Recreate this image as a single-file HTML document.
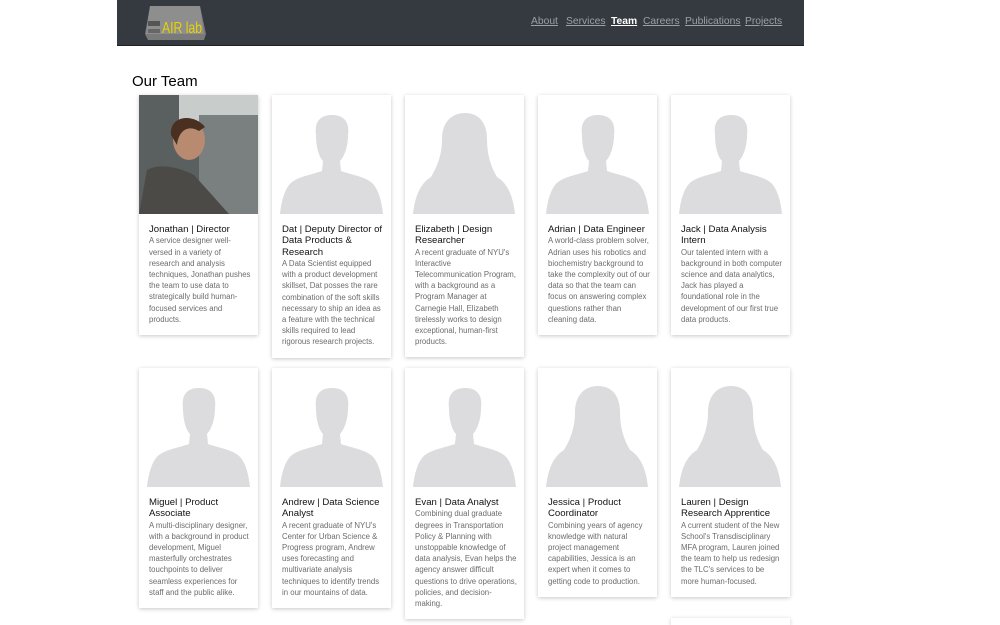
<!DOCTYPE html>
<html style="overflow:hidden;height:625px"><head><meta charset="utf-8"><style>
*{box-sizing:border-box;margin:0;padding:0}
body{width:1000px;height:625px;overflow:hidden;background:#fff;font-family:"Liberation Sans",sans-serif;position:relative}
.nav{position:absolute;left:117px;top:0;width:687px;height:46px;background:#343a40;border-bottom:1px solid #222}
.nav a{position:absolute;top:16px;font-size:10.3px;color:#9aa0a6;text-decoration:underline}
h1{position:absolute;left:132px;top:73px;font-size:15px;font-weight:normal;color:#000}
.card{position:absolute;width:119px;background:#fff;box-shadow:0 1px 4px rgba(0,0,0,.22)}
.card svg{display:block;width:119px;height:119px}
.t{padding:10px 6px 10px 10px}
.t b{display:block;font-weight:normal;font-size:9.6px;line-height:11.3px;color:#111}
.t p{font-size:7.8px;line-height:11.2px;color:#6c6c6c}
</style></head><body>
<div class="nav">
<svg style="position:absolute;left:27px;top:4px" width="64" height="38" viewBox="0 0 64 38"><path d="M6 2 H56 L62 30 L60 36 H4 L1 30 Z" fill="#7a7a7a"/><path d="M6 2 H56 L60 30 H2 Z" fill="#8e8e8e"/><rect x="4" y="17" width="12" height="5" fill="#555"/><rect x="4" y="25" width="12" height="4" fill="#666"/><text x="18" y="29" font-family="Liberation Sans Narrow, Liberation Sans" font-size="16" textLength="40" lengthAdjust="spacingAndGlyphs" fill="#e8d400">AIR lab</text></svg>
<a style="left:414px">About</a><a style="left:449px">Services</a><a style="left:494px;color:#fff;font-weight:bold">Team</a><a style="left:526px">Careers</a><a style="left:568px">Publications</a><a style="left:628px">Projects</a>
</div>
<h1>Our Team</h1>

<svg width="0" height="0" style="position:absolute"><defs>
<symbol id="m" viewBox="0 0 119 119"><rect width="119" height="119" fill="#fff"/><path d="M44 40 C42 25 50 20 60 20 C70 20 78 25 76 40 C76 52 72 62 68 66 L69 76 C80 80 96 82 102 90 C108 98 110 110 111 119 H8 C9 110 11 98 17 90 C23 82 39 80 50 76 L51 66 C47 62 44 52 44 40 Z" fill="#dcdcdf"/></symbol>
<symbol id="f" viewBox="0 0 119 119"><rect width="119" height="119" fill="#fff"/><path d="M60 18 C74 18 82 28 82 44 C82 60 86 72 92 82 C102 88 108 100 110 119 H8 C10 100 16 88 26 82 C32 72 37 60 37 44 C37 28 46 18 60 18 Z" fill="#dcdcdf"/></symbol>
</defs></svg>

<div class="card" style="left:139px;top:95px"><svg viewBox="0 0 119 119"><rect width="119" height="119" fill="#5a5f5f"/><rect x="40" y="0" width="79" height="60" fill="#c8ccca"/><rect x="60" y="20" width="59" height="99" fill="#7a7f80"/><ellipse cx="50" cy="45" rx="16" ry="20" fill="#b88a70"/><path d="M32 40 C30 20 55 18 66 32 L60 36 C50 30 40 34 38 50 Z" fill="#4a3020"/><path d="M0 119 L8 75 C20 68 40 72 55 80 L90 119 Z" fill="#4c4a46"/></svg><div class="t"><b>Jonathan | Director</b><p>A service designer well-versed in a variety of research and analysis techniques, Jonathan pushes the team to use data to strategically build human-focused services and products.</p></div></div>
<div class="card" style="left:272px;top:95px"><svg><use href="#m"/></svg><div class="t"><b>Dat | Deputy Director of Data Products &amp; Research</b><p>A Data Scientist equipped with a product development skillset, Dat posses the rare combination of the soft skills necessary to ship an idea as a feature with the technical skills required to lead rigorous research projects.</p></div></div>
<div class="card" style="left:405px;top:95px"><svg><use href="#f"/></svg><div class="t"><b>Elizabeth | Design Researcher</b><p>A recent graduate of NYU's Interactive Telecommunication Program, with a background as a Program Manager at Carnegie Hall, Elizabeth tirelessly works to design exceptional, human-first products.</p></div></div>
<div class="card" style="left:538px;top:95px"><svg><use href="#m"/></svg><div class="t"><b>Adrian | Data Engineer</b><p>A world-class problem solver, Adrian uses his robotics and biochemistry background to take the complexity out of our data so that the team can focus on answering complex questions rather than cleaning data.</p></div></div>
<div class="card" style="left:671px;top:95px"><svg><use href="#m"/></svg><div class="t"><b>Jack | Data Analysis Intern</b><p>Our talented intern with a background in both computer science and data analytics, Jack has played a foundational role in the development of our first true data products.</p></div></div>

<div class="card" style="left:139px;top:368px"><svg><use href="#m"/></svg><div class="t"><b>Miguel | Product Associate</b><p>A multi-disciplinary designer, with a background in product development, Miguel masterfully orchestrates touchpoints to deliver seamless experiences for staff and the public alike.</p></div></div>
<div class="card" style="left:272px;top:368px"><svg><use href="#m"/></svg><div class="t"><b>Andrew | Data Science Analyst</b><p>A recent graduate of NYU's Center for Urban Science &amp; Progress program, Andrew uses forecasting and multivariate analysis techniques to identify trends in our mountains of data.</p></div></div>
<div class="card" style="left:405px;top:368px"><svg><use href="#m"/></svg><div class="t"><b>Evan | Data Analyst</b><p>Combining dual graduate degrees in Transportation Policy &amp; Planning with unstoppable knowledge of data analysis, Evan helps the agency answer difficult questions to drive operations, policies, and decision-making.</p></div></div>
<div class="card" style="left:538px;top:368px"><svg><use href="#f"/></svg><div class="t"><b>Jessica | Product Coordinator</b><p>Combining years of agency knowledge with natural project management capabilities, Jessica is an expert when it comes to getting code to production.</p></div></div>
<div class="card" style="left:671px;top:368px"><svg><use href="#f"/></svg><div class="t"><b>Lauren | Design Research Apprentice</b><p>A current student of the New School's Transdisciplinary MFA program, Lauren joined the team to help us redesign the TLC's services to be more human-focused.</p></div></div>
<div class="card" style="left:671px;top:618px;height:7px"></div>
</body></html>
